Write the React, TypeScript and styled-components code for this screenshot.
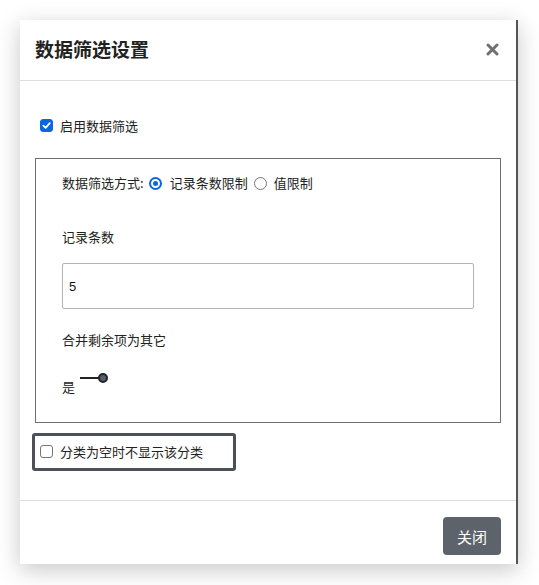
import React from "react";
import styled, { createGlobalStyle } from "styled-components";

const Global = createGlobalStyle`
  html, body { margin: 0; padding: 0; background: #ffffff; }
  body { font-family: "Noto Sans CJK SC", "Noto Sans", sans-serif; color: #222; }
`;

const Page = styled.div`
  padding: 20px 0 0 20px;
  width: 539px;
  height: 585px;
  box-sizing: border-box;
`;

const Modal = styled.div`
  width: 498px;
  height: 544px;
  box-sizing: border-box;
  background: #fff;
  border-right: 2px solid #555;
  box-shadow: 0 6px 22px rgba(0, 0, 0, 0.22);
  display: flex;
  flex-direction: column;
`;

const Header = styled.div`
  height: 61px;
  box-sizing: border-box;
  border-bottom: 1px solid #dedede;
  display: flex;
  align-items: center;
  justify-content: space-between;
  padding: 0 17px 0 15px;
`;

const Title = styled.h1`
  margin: 0;
  font-size: 19px;
  font-weight: 700;
  color: #222;
  line-height: 1;
  padding-bottom: 3px;
`;

const Close = styled.span`
  display: inline-flex;
  width: 13px;
  height: 13px;
  padding-bottom: 2px;
`;

const Body = styled.div`
  flex: 1;
  padding: 0 15px;
  display: flex;
  flex-direction: column;
`;

const CheckRow = styled.label`
  display: flex;
  align-items: center;
  gap: 7px;
  font-size: 13px;
  color: #222;
  line-height: 1;
`;

const TopCheck = styled(CheckRow)`
  margin-top: 38px;
  padding-left: 5px;
`;

const Box = styled.span<{ $checked?: boolean }>`
  width: 13px;
  height: 13px;
  box-sizing: border-box;
  border-radius: 3px;
  border: 1px solid ${(p) => (p.$checked ? "#0a66e3" : "#767676")};
  background: ${(p) => (p.$checked ? "#0a66e3" : "#fff")};
  display: inline-flex;
  align-items: center;
  justify-content: center;
`;

const Fieldset = styled.div`
  margin-top: 26px;
  border: 1px solid #6e6e6e;
  height: 265px;
  box-sizing: border-box;
  padding: 16px 26px 0 26px;
  display: flex;
  flex-direction: column;
`;

const RadioLine = styled.div`
  display: flex;
  align-items: center;
  font-size: 13px;
  line-height: 16px;
  color: #222;
`;

const Radio = styled.span<{ $checked?: boolean }>`
  width: 13px;
  height: 13px;
  box-sizing: border-box;
  border-radius: 50%;
  border: ${(p) => (p.$checked ? "2px solid #0a66e3" : "1px solid #767676")};
  background: #fff;
  display: inline-flex;
  align-items: center;
  justify-content: center;
  margin: ${(p) => (p.$checked ? "0 8px 0 5px" : "0 7px 0 6px")};
  &::after {
    content: "";
    display: ${(p) => (p.$checked ? "block" : "none")};
    width: 5px;
    height: 5px;
    border-radius: 50%;
    background: #0a66e3;
  }
`;

const FieldLabel = styled.div<{ $top: number }>`
  margin-top: ${(p) => p.$top}px;
  font-size: 13px;
  line-height: 16px;
  color: #222;
`;

const Input = styled.div`
  margin-top: 18px;
  height: 46px;
  box-sizing: border-box;
  border: 1px solid #b5b5b5;
  border-radius: 2px;
  display: flex;
  align-items: center;
  padding-left: 6px;
  font-family: "Liberation Sans", Arial, sans-serif;
  font-size: 13px;
  color: #111;
`;

const SwitchRow = styled.div`
  margin-top: 24px;
  display: flex;
  align-items: flex-start;
  gap: 5px;
  font-size: 13px;
  color: #222;
`;

const SwitchLabel = styled.span`
  margin-top: 7px;
  line-height: 16px;
`;

const Switch = styled.span`
  display: flex;
  align-items: center;
  height: 12px;
`;

const Track = styled.span`
  width: 19px;
  height: 2px;
  background: #222;
`;

const Knob = styled.span`
  width: 10px;
  height: 10px;
  box-sizing: border-box;
  border-radius: 50%;
  border: 2px solid #222;
  background: #54606b;
  margin-left: -1px;
`;

const Focused = styled.div`
  margin: 10px 0 0 -3px;
  width: 204px;
  height: 38px;
  box-sizing: border-box;
  border: 3px solid #4b5059;
  border-radius: 3px;
  display: flex;
  align-items: center;
  padding-left: 5px;
  padding-bottom: 2px;
`;

const Footer = styled.div`
  height: 64px;
  box-sizing: border-box;
  border-top: 1px solid #dedede;
  display: flex;
  justify-content: flex-end;
  align-items: flex-start;
  padding: 16px 15px 0 0;
`;

const Button = styled.button`
  width: 58px;
  height: 38px;
  border: none;
  border-radius: 4px;
  background: #5c636b;
  color: #fff;
  font-family: "Noto Sans CJK SC", sans-serif;
  font-size: 15px;
  padding: 0;
`;

const Check = () => (
  <svg width="9" height="9" viewBox="0 0 10 10">
    <path d="M1.5 5.2 L4 7.6 L8.6 2.4" fill="none" stroke="#fff" strokeWidth="2" strokeLinecap="round" strokeLinejoin="round" />
  </svg>
);

export default function App() {
  return (
    <Page>
      <Global />
      <Modal>
        <Header>
          <Title>数据筛选设置</Title>
          <Close>
            <svg width="13" height="13" viewBox="0 0 13 13">
              <path d="M2 2 L11 11 M11 2 L2 11" stroke="#707070" strokeWidth="3" strokeLinecap="round" />
            </svg>
          </Close>
        </Header>
        <Body>
          <TopCheck>
            <Box $checked>
              <Check />
            </Box>
            启用数据筛选
          </TopCheck>
          <Fieldset>
            <RadioLine>
              数据筛选方式:
              <Radio $checked />
              记录条数限制
              <Radio />
              值限制
            </RadioLine>
            <FieldLabel $top={38}>记录条数</FieldLabel>
            <Input>5</Input>
            <FieldLabel $top={23}>合并剩余项为其它</FieldLabel>
            <SwitchRow>
              <SwitchLabel>是</SwitchLabel>
              <Switch>
                <Track />
                <Knob />
              </Switch>
            </SwitchRow>
          </Fieldset>
          <Focused>
            <CheckRow>
              <Box />
              分类为空时不显示该分类
            </CheckRow>
          </Focused>
        </Body>
        <Footer>
          <Button>关闭</Button>
        </Footer>
      </Modal>
    </Page>
  );
}
